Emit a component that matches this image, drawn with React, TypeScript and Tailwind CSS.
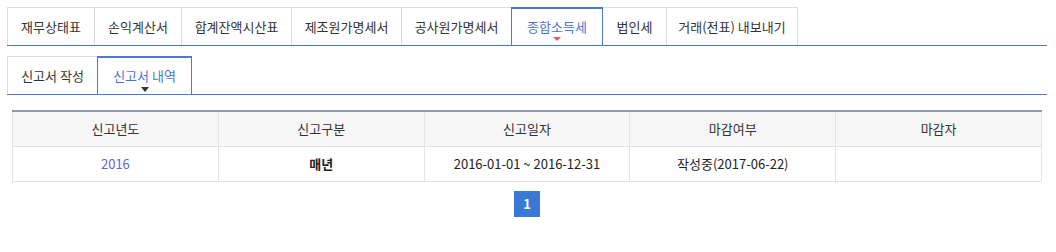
const topTabs = [
  { label: "재무상태표", w: "w-[87px]" },
  { label: "손익계산서", w: "w-[87px]" },
  { label: "합계잔액시산표", w: "w-[110px]" },
  { label: "제조원가명세서", w: "w-[110px]" },
  { label: "공사원가명세서", w: "w-[110px]" },
  { label: "종합소득세", w: "w-[92px]", active: true },
  { label: "법인세", w: "w-[63px]", afterActive: true },
  { label: "거래(전표) 내보내기", w: "w-[132px]", last: true },
];

const columns = ["신고년도", "신고구분", "신고일자", "마감여부", "마감자"];

export default function App() {
  return (
    <div className="w-[1056px] h-[252px] bg-white pl-[7px] pt-[7px] text-[13px] text-[#333] font-['Noto_Sans_CJK_KR','Noto_Sans',sans-serif]">
      {/* 상단 탭 */}
      <div className="w-[1040px] flex border-b border-[#4a7bd3]">
        {topTabs.map((t) =>
          t.active ? (
            <div
              key={t.label}
              className={`${t.w} h-[38px] relative flex items-center justify-center border-x border-t-2 border-[#4a7bd3] text-[#4a74d0]`}
            >
              {t.label}
              <span className="absolute bottom-[4px] left-1/2 -translate-x-1/2 w-0 h-0 border-x-[4px] border-x-transparent border-t-[4px] border-t-[#f0566a]" />
            </div>
          ) : (
            <div
              key={t.label}
              className={`${t.w} h-[38px] flex items-center justify-center border-t border-[#dcdcdc] ${
                t.afterActive ? "" : "border-l"
              } ${t.last ? "border-r" : ""}`}
            >
              {t.label}
            </div>
          )
        )}
      </div>

      {/* 하위 탭 */}
      <div className="w-[1040px] flex mt-[10px] border-b border-[#4a7bd3]">
        <div className="w-[90px] h-[38px] flex items-center justify-center border-l border-t border-[#dcdcdc]">
          신고서 작성
        </div>
        <div className="w-[95px] h-[38px] relative flex items-center justify-center border-x border-t-2 border-[#4a7bd3] text-[#4a74d0]">
          신고서 내역
          <span className="absolute bottom-[2px] left-1/2 -translate-x-1/2 w-0 h-0 border-x-[4px] border-x-transparent border-t-[5px] border-t-[#333]" />
        </div>
      </div>

      {/* 테이블 */}
      <div className="ml-[5px] mt-[15px] w-[1030px]">
        <table className="w-full table-fixed border-collapse">
          <thead>
            <tr className="bg-[#f6f6f6] border-t-2 border-t-[#8f9ab0]">
              {columns.map((c) => (
                <th
                  key={c}
                  className="h-[35px] font-normal text-[#333] border-x border-b border-[#e3e3e3] text-center"
                >
                  {c}
                </th>
              ))}
            </tr>
          </thead>
          <tbody>
            <tr>
              <td className="h-[35px] text-center border border-[#e3e3e3] text-[#5f63db]">2016</td>
              <td className="h-[35px] text-center border border-[#e3e3e3] text-[#222] font-semibold">매년</td>
              <td className="h-[35px] text-center border border-[#e3e3e3] text-[#222]">2016-01-01 ~ 2016-12-31</td>
              <td className="h-[35px] text-center border border-[#e3e3e3] text-[#222]">작성중(2017-06-22)</td>
              <td className="h-[35px] text-center border border-[#e3e3e3]"></td>
            </tr>
          </tbody>
        </table>

        {/* 페이지 */}
        <div className="flex justify-center mt-[9px]">
          <div className="w-[26px] h-[26px] bg-[#3a78d6] text-white font-bold flex items-center justify-center text-[13px]">
            1
          </div>
        </div>
      </div>
    </div>
  );
}
